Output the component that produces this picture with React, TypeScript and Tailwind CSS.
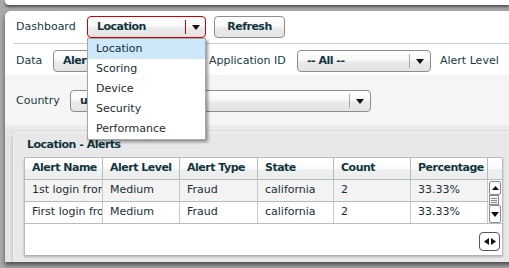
import React from 'react'

const font = "font-['DejaVu_Sans','Verdana',sans-serif]"
const btnBg = 'bg-[linear-gradient(#ffffff_0%,#f7f7f7_50%,#ebebeb_51%,#e4e4e4_100%)]'
const bold = 'text-[11px] font-bold tracking-[-0.5px] text-[#0f3540]'

function Caret() {
  return (
    <svg width="8" height="5" viewBox="0 0 8 5" className="block">
      <path d="M0 0H8L4 5Z" fill="#111" />
    </svg>
  )
}

function Select({ value, width, divider, red }: { value: string; width: string; divider: string; red?: boolean }) {
  return (
    <div
      className={`${width} h-[22px] rounded-[4px] border ${red ? 'border-[#d00000]' : 'border-[#8c8c8c]'} ${btnBg} flex items-center`}
    >
      <span className={`${divider} pl-[9px] ${bold} truncate`}>{value}</span>
      <span className={`w-px h-[14px] ${red ? 'bg-[#d00000]' : 'bg-[#a8a8a8]'}`} />
      <span className="flex-1 flex justify-center">
        <Caret />
      </span>
    </div>
  )
}

function Button({ label, width, left }: { label: string; width: string; left?: boolean }) {
  return (
    <div
      className={`${width} h-[22px] rounded-[4px] border border-[#8c8c8c] ${btnBg} flex items-center ${left ? 'pl-[9px]' : 'justify-center'} ${bold}`}
    >
      {label}
    </div>
  )
}

const cols = [
  { name: 'Alert Name', w: 'w-[78px]' },
  { name: 'Alert Level', w: 'w-[77px]' },
  { name: 'Alert Type', w: 'w-[78px]' },
  { name: 'State', w: 'w-[76px]' },
  { name: 'Count', w: 'w-[77px]' },
  { name: 'Percentage', w: 'w-[77px]' },
]

const rows = [
  ['1st login from new location', 'Medium', 'Fraud', 'california', '2', '33.33%'],
  ['First login from new country', 'Medium', 'Fraud', 'california', '2', '33.33%'],
]

const menu = ['Location', 'Scoring', 'Device', 'Security', 'Performance']

export default function App() {
  return (
    <div className={`${font} relative w-[509px] h-[268px] overflow-hidden bg-[#a9a9a9]`}>
      <div className="h-[5px] ml-[5px] bg-white rounded-bl-[4px] shadow-[0_2px_3px_rgba(0,0,0,0.55)]" />

      <div className="mt-[6px] ml-[5px] w-[530px] h-[251px] rounded-tl-[6px] overflow-hidden bg-[#e4e4e4] shadow-[0_3px_4px_rgba(0,0,0,0.55)]">
        <div className="bg-white">
          <div className="h-[32px] pl-[11px] flex items-center">
            <span className="w-[71px] text-[11px] text-[#173a44]">Dashboard</span>
            <Select value="Location" width="w-[119px]" divider="w-[97px]" red />
            <div className="ml-[8px]">
              <Button label="Refresh" width="w-[71px]" />
            </div>
          </div>
          <div className="ml-[9px] h-px bg-[#c7d0d0]" />
          <div className="h-[31px] pl-[11px] pt-[6px] flex items-start">
            <span className="w-[37px] h-[22px] leading-[22px] text-[11px] text-[#173a44]">Data</span>
            <Button label="Alerts" width="w-[80px]" left />
            <span className="ml-[76px] w-[88px] h-[22px] leading-[22px] text-[11px] text-[#173a44]">Application ID</span>
            <Select value="-- All --" width="w-[134px]" divider="w-[111px]" />
            <span className="ml-[9px] h-[22px] leading-[22px] text-[11px] text-[#173a44] whitespace-nowrap">Alert Level</span>
          </div>
        </div>

        <div className="h-[50px] bg-[#f5f5f5] pl-[11px] pt-[15px] flex items-start">
          <span className="w-[54px] h-[22px] leading-[22px] text-[11px] text-[#173a44]">Country</span>
          <Select value="united states" width="w-[301px]" divider="w-[278px]" />
        </div>
        <div className="h-[4px] bg-[#ececec]" />

        <div className="ml-[8px] mt-[3px] rounded-tl-[6px] border-t border-l border-[#f3f3f3] bg-[#e8e8e8] h-[130px] shadow-[0_2px_3px_rgba(0,0,0,0.3)]">
          <div className={`h-[24px] pl-[13px] flex items-center ${bold}`}>Location - Alerts</div>
          <div className="ml-[10px] w-[479px] h-[98px] bg-white border-l border-r border-t border-[#b4bebe] shadow-[0_2px_2px_rgba(0,0,0,0.25)]">
            <div className="flex h-[22px] border-b border-[#b4bebe] bg-[linear-gradient(#ffffff_0%,#fbfbfb_50%,#eff1f1_51%,#eceeee_100%)]">
              {cols.map((c) => (
                <div
                  key={c.name}
                  className={`${c.w} border-r border-[#b4bebe] pl-[7px] flex items-center ${bold} whitespace-nowrap overflow-hidden`}
                >
                  {c.name}
                </div>
              ))}
              <div className="flex-1" />
            </div>
            <div className="flex">
              <div>
                {rows.map((r, i) => (
                  <div key={i} className={`flex h-[22px] border-b border-[#b4bebe] ${i === 0 ? 'bg-[#f3f3f3]' : 'bg-white'}`}>
                    {r.map((v, j) => (
                      <div
                        key={j}
                        className={`${cols[j].w} border-r border-[#c4cccc] pl-[7px] flex items-center text-[11px] text-[#1b2d33] whitespace-nowrap overflow-hidden`}
                      >
                        {v}
                      </div>
                    ))}
                  </div>
                ))}
              </div>
              <div className="flex-1 h-[44px] border-b border-[#b4bebe] flex flex-col pt-[1px]">
                <div className="h-[14px] mx-px border border-[#8a8a8a] rounded-[2px] bg-white flex items-center justify-center">
                  <svg width="7" height="4" viewBox="0 0 7 4"><path d="M0 4H7L3.5 0Z" fill="#111" /></svg>
                </div>
                <div className="h-[10px] mx-px mr-[3px] border border-[#8a8a8a] bg-[#f4f4f4] flex flex-col items-center justify-center gap-px">
                  <span className="w-[6px] h-px bg-[#888]" />
                  <span className="w-[6px] h-px bg-[#888]" />
                  <span className="w-[6px] h-px bg-[#888]" />
                </div>
                <div className="flex-1 mx-px border border-[#8a8a8a] rounded-[2px] bg-white flex items-center justify-center">
                  <Caret />
                </div>
              </div>
            </div>
            <div className="flex justify-end pt-[8px] pr-[2px]">
              <div className="w-[21px] h-[19px] rounded-[4px] border border-[#555] bg-white flex items-center justify-center gap-[2px]">
                <svg width="5" height="7" viewBox="0 0 5 7"><path d="M5 0V7L0 3.5Z" fill="#111" /></svg>
                <svg width="5" height="7" viewBox="0 0 5 7"><path d="M0 0V7L5 3.5Z" fill="#111" /></svg>
              </div>
            </div>
          </div>
        </div>
      </div>

      <div className="absolute left-[87px] top-[38px] w-[119px] bg-white border border-[#a8a8a8] shadow-[2px_2px_3px_rgba(0,0,0,0.4)]">
        {menu.map((m, i) => (
          <div
            key={m}
            className={`h-[20px] pl-[8px] flex items-center text-[11px] text-[#1b2d33] ${i === 0 ? 'bg-[#cde9f9]' : ''}`}
          >
            {m}
          </div>
        ))}
      </div>
    </div>
  )
}
